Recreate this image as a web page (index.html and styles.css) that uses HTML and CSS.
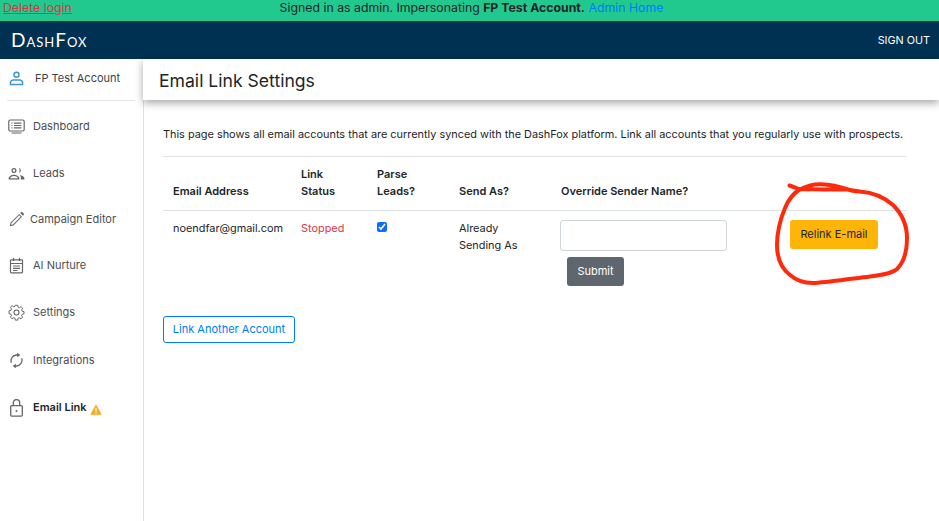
FILE: index.html
```html
<!DOCTYPE html>
<html lang="en">
<head>
<meta charset="utf-8">
<title>Email Link Settings</title>
<link rel="stylesheet" href="styles.css">
</head>
<body>
<div class="impersonate">
  <a class="delete" href="#">Delete login</a>
  <span class="signed">Signed in as admin. Impersonating <b>FP Test Account.</b> <a href="#">Admin Home</a></span>
</div>
<header class="topnav">
  <span class="logo">DashFox</span>
  <a class="signout" href="#">SIGN OUT</a>
</header>
<div class="shell">
  <aside class="sidebar">
    <div class="account">
      <svg class="ic" viewBox="0 0 16 16" fill="none" stroke="#3f94d6" stroke-width="1.6"><circle cx="8" cy="4" r="2.700"/><path d="M1.500 14.500v-2c0-1.600 1.600-2.800 3-2.800h7c1.400 0 3 1.200 3 2.800v2z"/></svg>
      <span>FP Test Account</span>
    </div>
    <nav class="menu">
      <a class="item" href="#">
        <svg class="ic" viewBox="0 0 17 17" fill="none" stroke="#666" stroke-width="1.200"><rect x=".8" y="2" width="15.400" height="11" rx="1.500"/><path d="M3.500 15h10M3.500 5.200h1M3.500 7.500h1M3.500 9.800h1M6 5.200h7.500M6 7.500h7.500M6 9.800h7.500"/></svg>
        <span>Dashboard</span>
      </a>
      <a class="item" href="#">
        <svg class="ic" viewBox="0 0 17 17" fill="#666"><path d="M6 3a2.500 2.500 0 1 1 0 5 2.500 2.500 0 0 1 0-5zm0 1.300a1.200 1.200 0 1 0 0 2.400 1.200 1.200 0 0 0 0-2.400zM11 3.100a2.500 2.500 0 0 1 0 4.800c.8-1.400.8-3.400 0-4.800zM.6 13.800c0-2.800 3.500-4 5.400-4s5.400 1.200 5.400 4v.7H.6zm1.500-.5h7.800c-.3-1.400-2.400-2.200-3.900-2.200s-3.600.8-3.900 2.200zM12 10c2.200.4 4.400 1.500 4.400 3.600v.9h-3.500v-.9c0-1.500-.2-2.600-.9-3.600z"/></svg>
        <span>Leads</span>
      </a>
      <a class="item edit" href="#">
        <svg class="ic" viewBox="0 0 17 17" fill="#666"><path d="M1.800 15.200l.8-3.700L11.200 3l2.800 2.800-8.500 8.600zM12.200 2l.8-.8c.4-.4 1-.4 1.400 0l1.300 1.300c.4.400.4 1 0 1.400l-.8.800z"/><path fill="#fff" d="M3.500 11.900l7.700-7.600 1.400 1.500-7.600 7.600-1.900.4z"/></svg>
        <span>Campaign Editor</span>
      </a>
      <a class="item" href="#">
        <svg class="ic" viewBox="0 0 17 17" fill="none" stroke="#666" stroke-width="1.200"><rect x="2.500" y="2.800" width="12" height="13" rx=".8"/><path d="M5.500.8v3.200M11.500.8v3.200M2.500 6.500h12M5 9h7M5 11.300h7M5 13.500h4.500"/></svg>
        <span>AI Nurture</span>
      </a>
      <a class="item" href="#">
        <svg class="ic" viewBox="0 0 17 17" fill="none" stroke="#666" stroke-width="1.100"><circle cx="8.500" cy="8.500" r="2.500"/><path d="M7.200 1.200h2.600l.4 2.100 1.400.6 1.800-1.200 1.900 1.800-1.200 1.900.6 1.400 2.100.4v2.500l-2.100.4-.6 1.400 1.200 1.900-1.900 1.800-1.800-1.200-1.400.6-.4 2.100H7.200l-.4-2.100-1.400-.6-1.800 1.200-1.900-1.800 1.200-1.900-.6-1.400-2.100-.4V7.200l2.100-.4.6-1.400L1.700 3.500l1.900-1.800 1.800 1.200 1.400-.6z" transform="translate(.9 .2) scale(.9)"/></svg>
        <span>Settings</span>
      </a>
      <a class="item" href="#">
        <svg class="ic" viewBox="0 0 17 17" fill="none" stroke="#666" stroke-width="1.300"><path d="M3.200 10.800A6 6 0 0 1 8.500 3H10M13.800 6.200A6 6 0 0 1 8.500 14H7"/><path fill="#666" stroke="none" d="M9.200.7l3.200 2.300-3.200 2.300zM7.800 11.700l-3.200 2.300 3.200 2.300z"/></svg>
        <span>Integrations</span>
      </a>
      <a class="item current" href="#">
        <svg class="ic lock" viewBox="0 0 17 18" fill="none" stroke="#666" stroke-width="1.300"><rect x="2.700" y="6.700" width="11.600" height="10.400" rx="1"/><path d="M5.300 6.700V3.800a3.200 3.200 0 0 1 6.400 0v2.900"/><circle cx="8.500" cy="12" r="1" fill="#666" stroke="none"/></svg>
        <span>Email Link</span>
        <svg class="warn" viewBox="0 0 12 11"><path fill="#fbaa1c" d="M6 .3l5.800 10.400H.2z"/><path fill="#fff" d="M5.500 3.800h1v3.600h-1zM5.500 8.100h1v1.100h-1z"/></svg>
      </a>
    </nav>
  </aside>
  <main class="main">
    <h1 class="title">Email Link Settings</h1>
    <div class="content">
      <p class="intro">This page shows all email accounts that are currently synced with the DashFox platform. Link all accounts that you regularly use with prospects.</p>
      <table class="links">
        <thead>
          <tr>
            <th class="c1">Email Address</th>
            <th class="c2">Link Status</th>
            <th class="c3">Parse Leads?</th>
            <th class="c4">Send As?</th>
            <th class="c5">Override Sender Name?</th>
            <th class="c6"></th>
          </tr>
        </thead>
        <tbody>
          <tr>
            <td>noendfar@gmail.com</td>
            <td class="stopped">Stopped</td>
            <td><input class="check" type="checkbox" checked></td>
            <td>Already Sending As</td>
            <td>
              <input class="name" type="text">
              <button class="submit" type="button">Submit</button>
            </td>
            <td class="action"><button class="relink" type="button">Relink E-mail</button></td>
          </tr>
        </tbody>
      </table>
      <button class="another" type="button">Link Another Account</button>
    </div>
  </main>
</div>
<svg class="scribble" viewBox="0 0 939 521" fill="none" stroke="#ff2a0c" stroke-width="4" stroke-linecap="round" stroke-linejoin="round">
  <path d="M789.500 185.500C794 187 797 188.500 800 189.500C806 186 813 184 821 184.200C832 184.500 841 187 848 189.500C824 190 810 189 800 189C793 194 788 200 785 208C780 220 777 232 777 245C777 258 781 268 790 275C797 281 805 283.500 815 283C830 282 850 279 870 276.500C882 275 892 273.500 897 269C903 263 907 252 907 238C907 226 903 215 893 205C884 197 873 192.500 860 191.500C855 191 851 190.500 848 189.500"/>
</svg>
</body>
</html>
```
FILE: styles.css
```css
* { box-sizing: border-box; }
html, body { margin: 0; height: 100%; }
body {
  font-family: Inter, "Liberation Sans", sans-serif;
  font-size: 11px;
  line-height: 17px;
  color: #212529;
  background: #fff;
  overflow: hidden;
  position: relative;
  display: flex;
  flex-direction: column;
}
a { text-decoration: none; }
.impersonate {
  height: 21px;
  flex: none;
  background: #21c98f;
  position: relative;
  text-align: center;
  font-size: 12.300px;
  line-height: 15px;
  padding-left: 4px;
}
.impersonate a { color: #007bff; }
.impersonate .delete {
  position: absolute;
  left: 3px;
  top: 0;
  color: #dc3545;
  text-decoration: underline;
}
.topnav {
  height: 38px;
  flex: none;
  background: #003152;
  color: #fff;
  display: flex;
  align-items: center;
  justify-content: space-between;
  padding: 0 9px 0 11px;
}
.logo {
  font-family: "Lato", sans-serif;
  font-variant: small-caps;
  font-size: 19px;
  letter-spacing: 1px;
  font-weight: 400;
  line-height: 24px;
}
.signout { color: #fff; font-size: 10.800px; font-weight: 400; }
.shell { flex: 1; display: flex; min-height: 0; }
.sidebar {
  width: 144px;
  flex: none;
  border-right: 1px solid #dfe1e3;
  padding: 0 8px 0 7px;
}
.account {
  height: 42px;
  display: flex;
  align-items: center;
  gap: 11px;
  padding-left: 2px;
  padding-bottom: 2px;
  border-bottom: 1px solid #e4e5e6;
  color: #3d4145;
}
.account .ic { width: 15px; height: 15px; }
.menu { display: flex; flex-direction: column; padding-top: 2px; }
.item {
  height: 46px;
  display: flex;
  align-items: center;
  gap: 8px;
  padding-left: 1px;
  color: #4a4e52;
}
.item:nth-child(2), .item:nth-child(5), .item:nth-child(7) { margin-top: 1px; }
.item:nth-child(6) { margin-top: 2px; }
.item.edit { gap: 5px; }
.item.current { color: #212529; font-weight: 600; }
.ic { width: 17px; height: 17px; flex: none; }
.lock { height: 18px; margin-top: 2px; }
.warn { width: 12px; height: 11px; margin: 4px 0 0 -5px; }
.main { flex: 1; min-width: 0; display: flex; flex-direction: column; }
.title {
  margin: 0 0 0 -1px;
  height: 41px;
  flex: none;
  padding-left: 16px;
  font-size: 17.600px;
  line-height: 44px;
  font-weight: 400;
  color: #212529;
  box-shadow: 0 3px 8px rgba(0, 0, 0, .35);
  background: #fff;
}
.content { padding: 26px 32px 0 19px; }
.intro { margin: 0 0 13px; white-space: nowrap; font-size: 10.900px; }
.links { width: 744px; border-collapse: collapse; table-layout: fixed; margin-bottom: 29px; }
.links th {
  text-align: left;
  vertical-align: bottom;
  font-weight: 600;
  padding: 9px 10px 10px;
  border-top: 1px solid #dee2e6;
  border-bottom: 1px solid #dee2e6;
}
.links td { vertical-align: top; padding: 9px 10px 0; height: 76px; font-size: 10.900px; }
.c1 { width: 128px; }
.c2 { width: 76px; }
.c3 { width: 82px; }
.c4 { width: 102px; }
.c5 { width: 239px; }
.links td.stopped { color: #dc3545; }
.check { margin: 2px 0 0; width: 10px; height: 10px; display: block; accent-color: #0d6efd; }
.name {
  display: block;
  width: 167px;
  height: 31px;
  border: 1px solid #ced4da;
  border-radius: 3px;
  background: #fff;
  margin: 0 0 6px -1px;
}
.submit, .relink, .another {
  font-family: inherit;
  font-size: 11px;
  line-height: 17px;
  border-radius: 3px;
  cursor: pointer;
}
.submit {
  display: block;
  margin-left: 6px;
  width: 57px;
  height: 29px;
  padding: 0;
  color: #fff;
  background: #5f676e;
  border: 0;
}
.links td.action { padding-left: 0; padding-right: 0; }
.relink {
  display: block;
  width: 88px;
  height: 29px;
  padding: 0;
  color: #212529;
  background: #ffb508;
  border: 0;
}
.another {
  display: block;
  width: 132px;
  height: 27px;
  padding: 0;
  color: #007bff;
  background: #fff;
  border: 1px solid #007bff;
}
.scribble { position: absolute; left: 0; top: 0; width: 939px; height: 521px; pointer-events: none; }
```
